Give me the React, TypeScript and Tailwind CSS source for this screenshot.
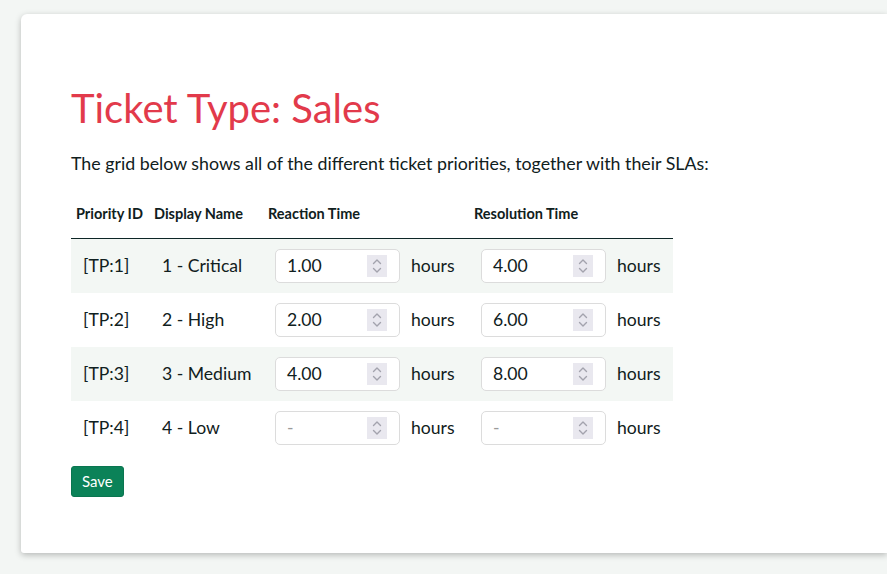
import React from "react";

const rows = [
  { id: "[TP:1]", name: "1 - Critical", reaction: "1.00", resolution: "4.00" },
  { id: "[TP:2]", name: "2 - High", reaction: "2.00", resolution: "6.00" },
  { id: "[TP:3]", name: "3 - Medium", reaction: "4.00", resolution: "8.00" },
  { id: "[TP:4]", name: "4 - Low", reaction: "", resolution: "" },
];

const cols = "grid grid-cols-[79px_114px_136px_70px_136px_67px]";

function Spinner() {
  return (
    <div className="w-[20px] h-[22px] bg-[#e9e8ef] flex items-center justify-center">
      <svg width="12" height="18" viewBox="0 0 12 18" fill="none" stroke="#a3a3ad" strokeWidth="1.4" strokeLinecap="round" strokeLinejoin="round">
        <path d="M2.5 6.5 6 3l3.5 3.5" />
        <path d="M2.5 11.5 6 15l3.5-3.5" />
      </svg>
    </div>
  );
}

function NumberBox({ value }: { value: string }) {
  return (
    <div className="w-[125px] h-[34px] bg-white border border-[#dcdcdc] rounded-[5px] flex items-center justify-between pl-[11px] pr-[12px]">
      <span className={value ? "text-[17.6px] text-[#102020]" : "text-[17.6px] text-[#9a9a9a]"}>{value || "-"}</span>
      <Spinner />
    </div>
  );
}

export default function App() {
  return (
    <div className="min-h-screen bg-[#f3f6f4] pt-[14px] pl-[21px] font-['Lato','Noto_Sans',sans-serif] text-[#102020]">
      <div className="bg-white rounded-tl-[6px] rounded-bl-[3px] shadow-[0_2px_6px_rgba(0,0,0,0.25)] h-[539px] pl-[50px] pt-[82px]">
        <h1 className="text-[40px] leading-[24px] text-[#e23a4b] font-normal">Ticket Type: Sales</h1>
        <p className="text-[17.8px] mt-[31px] leading-[24px]">
          The grid below shows all of the different ticket priorities, together with their SLAs:
        </p>

        <div className="mt-[14px] w-[602px]">
          <div className={`${cols} h-[50px] items-center border-b border-[#0d2626] text-[14.5px] font-bold`}>
            <div className="pl-[5px]">Priority ID</div>
            <div className="pl-[4px]">Display Name</div>
            <div className="col-span-2 pl-[4px]">Reaction Time</div>
            <div className="col-span-2 pl-[4px]">Resolution Time</div>
          </div>
          {rows.map((r, i) => (
            <div key={r.id} className={`${cols} h-[54px] items-center text-[17.6px] ${i % 2 === 0 ? "bg-[#f3f7f4]" : "bg-white"}`}>
              <div className="pl-[12px]">{r.id}</div>
              <div className="pl-[12px]">{r.name}</div>
              <div className="pl-[11px]"><NumberBox value={r.reaction} /></div>
              <div className="pl-[11px]">hours</div>
              <div className="pl-[11px]"><NumberBox value={r.resolution} /></div>
              <div className="pl-[11px]">hours</div>
            </div>
          ))}
        </div>

        <button className="mt-[11px] h-[31px] px-[10px] bg-[#0b8258] border border-[#0a7550] text-white text-[15px] rounded-[3px] leading-none">
          Save
        </button>
      </div>
    </div>
  );
}
